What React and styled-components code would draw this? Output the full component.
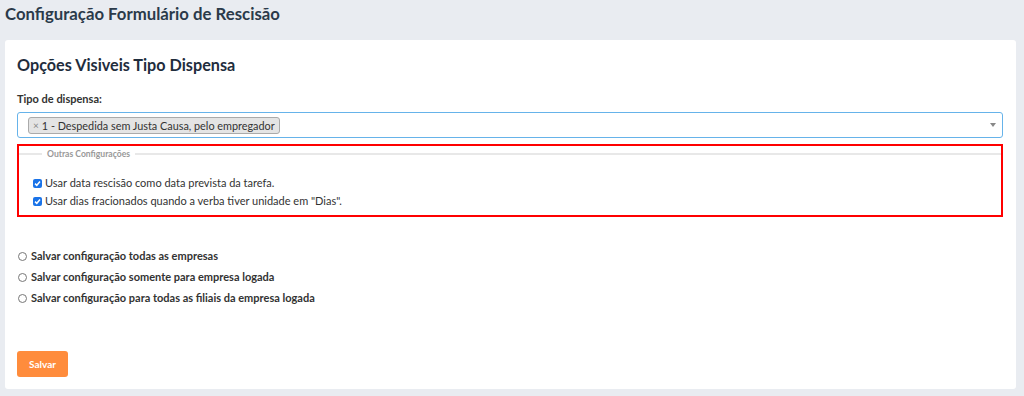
import React from "react";
import styled, { createGlobalStyle } from "styled-components";

const Global = createGlobalStyle`
  html, body { margin: 0; padding: 0; background: #e9ecf1; }
  body { font-family: Lato, "Open Sans", sans-serif; color: #333; }
  * { box-sizing: border-box; }
`;

const Page = styled.div`
  width: 1024px;
  height: 396px;
  padding: 0 8px 7px 5px;
  display: flex;
  flex-direction: column;
`;

const PageTitle = styled.h1`
  margin: 0;
  height: 40px;
  padding-top: 3px;
  font-size: 16.75px;
  font-weight: 700;
  color: #2b3a4a;
  line-height: 22px;
`;

const Card = styled.div`
  flex: 1;
  background: #fff;
  border-radius: 3px;
  padding: 14px 13px 12px 12px;
  display: flex;
  flex-direction: column;
`;

const CardTitle = styled.h2`
  margin: 0;
  font-size: 16.2px;
  font-weight: 700;
  color: #1f2d3d;
  line-height: 22px;
  margin-bottom: 16px;
`;

const Label = styled.label`
  font-size: 11px;
  font-weight: 700;
  color: #333;
  line-height: 14px;
  margin-bottom: 6px;
  display: block;
`;

const Select = styled.div`
  height: 26px;
  border: 1px solid #66b3ea;
  border-radius: 3px;
  display: flex;
  align-items: center;
  padding: 0 6px 0 10px;
  position: relative;
`;

const Tag = styled.span`
  display: inline-flex;
  align-items: center;
  height: 17px;
  background: #e4e4e4;
  border: 1px solid #aaa;
  border-radius: 3px;
  padding: 0 4px 0 4px;
  font-size: 10.85px;
  color: #333;
  gap: 3px;
`;

const TagX = styled.span`
  color: #888;
  font-size: 10px;
`;

const Caret = styled.span`
  margin-left: auto;
  width: 0;
  height: 0;
  border-left: 3px solid transparent;
  border-right: 3px solid transparent;
  border-top: 4px solid #888;
`;

const Highlight = styled.div`
  margin-top: 6px;
  border: 2px solid #ff0000;
  height: 73px;
  padding: 3px 0 0 0;
`;

const Fieldset = styled.fieldset`
  margin: 0;
  border: 0;
  border-top: 2px solid #e8e8e8;
  padding: 0 0 0 14px;
  min-width: 0;
`;

const Legend = styled.legend`
  font-size: 8.6px;
  font-weight: 700;
  color: #999;
  padding: 0 5px;
  margin-left: 9px;
  line-height: 10px;
`;

const Options = styled.div`
  margin-top: 17px;
  display: flex;
  flex-direction: column;
  gap: 4px;
`;

const CheckRow = styled.label`
  display: flex;
  align-items: center;
  gap: 3px;
  font-size: 11px;
  color: #333;
  line-height: 14px;
`;

const Box = styled.span`
  width: 9px;
  height: 9px;
  border-radius: 2px;
  background: #1a73e8;
  display: inline-flex;
  align-items: center;
  justify-content: center;
`;

const Radios = styled.div`
  margin-top: 32px;
  display: flex;
  flex-direction: column;
  gap: 7px;
`;

const RadioRow = styled.label`
  display: flex;
  align-items: center;
  gap: 4px;
  font-size: 11px;
  font-weight: 700;
  color: #333;
  line-height: 14px;
  margin-left: 1px;
`;

const Circle = styled.span`
  width: 9px;
  height: 9px;
  border: 1px solid #777;
  border-radius: 50%;
  background: #fff;
`;

const Footer = styled.div`
  margin-top: auto;
`;

const Button = styled.button`
  width: 51px;
  height: 26px;
  background: #ff8c3c;
  color: #fff;
  border: 0;
  border-radius: 3px;
  font-family: inherit;
  font-size: 10px;
  font-weight: 700;
  margin-left: 0;
`;

const Check = () => (
  <Box>
    <svg width="7" height="7" viewBox="0 0 7 7">
      <path d="M1 3.6 L2.8 5.3 L6 1.6" stroke="#fff" strokeWidth="1.5" fill="none" />
    </svg>
  </Box>
);

export default function App() {
  return (
    <Page>
      <Global />
      <PageTitle>Configuração Formulário de Rescisão</PageTitle>
      <Card>
        <CardTitle>Opções Visiveis Tipo Dispensa</CardTitle>
        <Label>Tipo de dispensa:</Label>
        <Select>
          <Tag>
            <TagX>×</TagX>1 - Despedida sem Justa Causa, pelo empregador
          </Tag>
          <Caret />
        </Select>
        <Highlight>
          <Fieldset>
            <Legend>Outras Configurações</Legend>
            <Options>
              <CheckRow>
                <Check />
                Usar data rescisão como data prevista da tarefa.
              </CheckRow>
              <CheckRow>
                <Check />
                Usar dias fracionados quando a verba tiver unidade em "Dias".
              </CheckRow>
            </Options>
          </Fieldset>
        </Highlight>
        <Radios>
          <RadioRow>
            <Circle />
            Salvar configuração todas as empresas
          </RadioRow>
          <RadioRow>
            <Circle />
            Salvar configuração somente para empresa logada
          </RadioRow>
          <RadioRow>
            <Circle />
            Salvar configuração para todas as filiais da empresa logada
          </RadioRow>
        </Radios>
        <Footer>
          <Button>Salvar</Button>
        </Footer>
      </Card>
    </Page>
  );
}
